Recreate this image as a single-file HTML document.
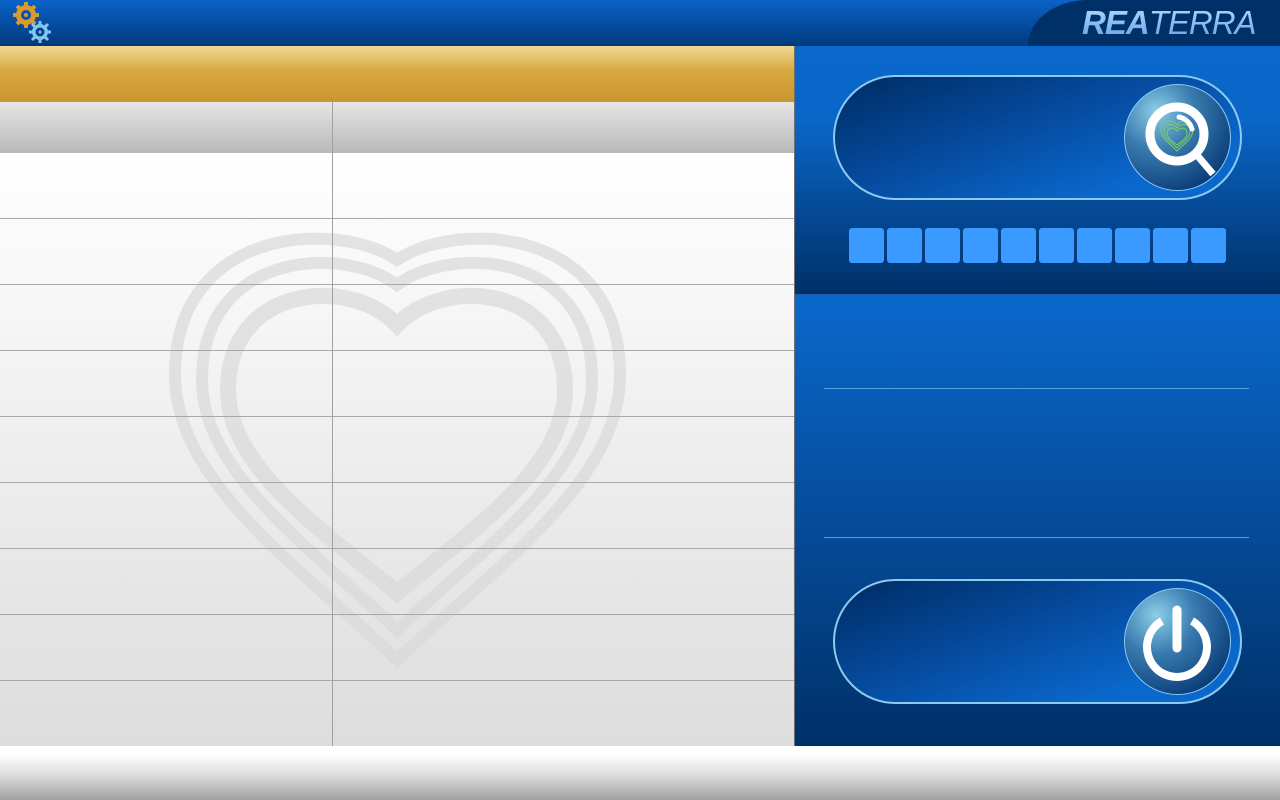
<!DOCTYPE html>
<html><head><style>
*{margin:0;padding:0;box-sizing:border-box}
body{width:1280px;height:800px;overflow:hidden;position:relative;font-family:"Liberation Sans",sans-serif;background:#fff}
.a{position:absolute}
.hdr{left:0;top:0;width:1280px;height:46px;background:linear-gradient(#0a62c8,#003a7c)}
.logo{left:1028px;top:0;width:252px;height:46px;background:#003068;border-top-left-radius:60px 46px}
.logo span{position:absolute;left:54px;top:4px;font-size:33px;font-style:italic;letter-spacing:-1px;color:transparent;background:linear-gradient(#b8dcff,#5fa0e0);-webkit-background-clip:text;background-clip:text}
.gold{left:0;top:46px;width:795px;height:56px;background:linear-gradient(#f0d890,#d8a840 45%,#c99630)}
.th{left:0;top:102px;width:795px;height:51px;background:linear-gradient(#e6e6e6,#b8b8b8)}
.tb{left:0;top:153px;width:795px;height:593px;background:linear-gradient(#fff,#dcdddc)}
.hl{left:0;width:795px;height:1px;background:#a8a8a8}
.vl{left:332px;top:102px;width:1px;height:644px;background:#a0a0a0}
.p1{left:795px;top:46px;width:485px;height:248px;background:linear-gradient(#0a68cc 0%,#0a66c8 30%,#003068 100%)}
.p2{left:795px;top:294px;width:485px;height:452px;background:linear-gradient(#0a68cc,#003068);border-top:1px solid #1b5da0}
.line{left:824px;width:425px;height:1px;background:#5aa0e0}
.pill{left:833px;width:409px;height:125px;border-radius:63px;border:2px solid #8ccaf0;background:linear-gradient(160deg,#002c64 0%,#0650a8 50%,#0a68cc 80%)}
.circ{width:107px;height:107px;border-radius:50%;border:1px solid #8ccaf0;background:radial-gradient(circle at 30% 25%,#8ccfe8 0%,#3a7cb0 35%,#0a3c78 80%,#083060 100%)}
.sq{top:228px;width:35px;height:35px;border-radius:3px;background:#3a9aff}
.foot{left:0;top:746px;width:1280px;height:54px;background:linear-gradient(#fff 15%,#e0e0e0 50%,#a0a0a0)}
</style></head><body>
<div class="a hdr"></div>
<div class="a logo"><span><b>REA</b>TERRA</span></div>
<svg class="a" style="left:10px;top:0" width="46" height="46" viewBox="0 0 46 46">
<g fill="#d89b2c"><circle cx="16" cy="15" r="10"/>
<g stroke="#d89b2c" stroke-width="4"><line x1="16" y1="2" x2="16" y2="28"/><line x1="3" y1="15" x2="29" y2="15"/><line x1="7" y1="6" x2="25" y2="24"/><line x1="25" y1="6" x2="7" y2="24"/></g></g>
<circle cx="16" cy="15" r="5" fill="#0a52a8"/><circle cx="16" cy="15" r="2" fill="#d89b2c"/>
<g fill="#7fc8f0"><circle cx="30" cy="32" r="8"/>
<g stroke="#7fc8f0" stroke-width="3"><line x1="30" y1="21" x2="30" y2="43"/><line x1="19" y1="32" x2="41" y2="32"/><line x1="22" y1="24" x2="38" y2="40"/><line x1="38" y1="24" x2="22" y2="40"/></g></g>
<circle cx="30" cy="32" r="4.5" fill="#06428a"/><circle cx="30" cy="32" r="1.5" fill="#7fc8f0"/>
</svg>
<div class="a gold"></div>
<div class="a th"></div>
<div class="a tb"></div>
<svg class="a" style="left:160px;top:225px" width="480" height="450" viewBox="0 0 480 450">
<g fill="none" stroke="#d8d8d8" stroke-opacity="0.7" stroke-width="12">
<path d="M237 35 C180 -5 15 0 15 150 C15 260 150 350 237 435 C325 350 460 260 460 150 C460 0 295 -5 237 35Z"/>
<path d="M237 60 C185 20 42 25 42 155 C42 250 160 330 237 405 C315 330 432 250 432 155 C432 25 290 20 237 60Z"/>
<path d="M237 100 C190 50 68 60 68 165 C68 245 170 310 237 368 C305 310 405 245 405 165 C405 60 285 50 237 100Z" stroke-width="16"/>
</g></svg>
<div class="a hl" style="top:218px"></div><div class="a hl" style="top:284px"></div><div class="a hl" style="top:350px"></div><div class="a hl" style="top:416px"></div><div class="a hl" style="top:482px"></div><div class="a hl" style="top:548px"></div><div class="a hl" style="top:614px"></div><div class="a hl" style="top:680px"></div>
<div class="a vl"></div>
<div class="a" style="left:794px;top:46px;width:1px;height:700px;background:#707070"></div>
<div class="a p1"></div>
<div class="a p2"></div>
<div class="a line" style="top:388px"></div>
<div class="a line" style="top:537px"></div>
<div class="a pill" style="top:75px"></div>
<div class="a circ" style="left:1124px;top:84px"></div>
<svg class="a" style="left:1124px;top:84px" width="107" height="107" viewBox="0 0 107 107">
<g fill="none" stroke="#7fd060" stroke-width="1">
<path d="M53 41 C47 34 37 37 37 46 C37 54 46 60 53 67 C60 60 69 54 69 46 C69 37 59 34 53 41Z"/>
<path d="M53 44 C48 38 40 40 40 47 C40 54 47 58 53 64 C59 58 66 54 66 47 C66 40 58 38 53 44Z"/>
<path d="M53 47 C49 42 43 44 43 49 C43 54 48 57 53 61 C58 57 63 54 63 49 C63 44 57 42 53 47Z"/></g>
<circle cx="53" cy="50" r="27" fill="none" stroke="#fff" stroke-width="9"/>
<path d="M55 33 A17 17 0 0 1 68 45" fill="none" stroke="#fff" stroke-width="5" stroke-linecap="round"/>
<line x1="72" y1="70" x2="89" y2="90" stroke="#fff" stroke-width="7"/>
</svg>
<div class="a sq" style="left:849px"></div><div class="a sq" style="left:887px"></div><div class="a sq" style="left:925px"></div><div class="a sq" style="left:963px"></div><div class="a sq" style="left:1001px"></div><div class="a sq" style="left:1039px"></div><div class="a sq" style="left:1077px"></div><div class="a sq" style="left:1115px"></div><div class="a sq" style="left:1153px"></div><div class="a sq" style="left:1191px"></div>
<div class="a pill" style="top:579px"></div>
<div class="a circ" style="left:1124px;top:588px"></div>
<svg class="a" style="left:1124px;top:588px" width="107" height="107" viewBox="0 0 107 107">
<path d="M38 33 A30 30 0 1 0 68 33" fill="none" stroke="#fff" stroke-width="8"/>
<line x1="53" y1="22" x2="53" y2="60" stroke="#fff" stroke-width="9" stroke-linecap="round"/>
</svg>
<div class="a foot"></div>
</body></html>
